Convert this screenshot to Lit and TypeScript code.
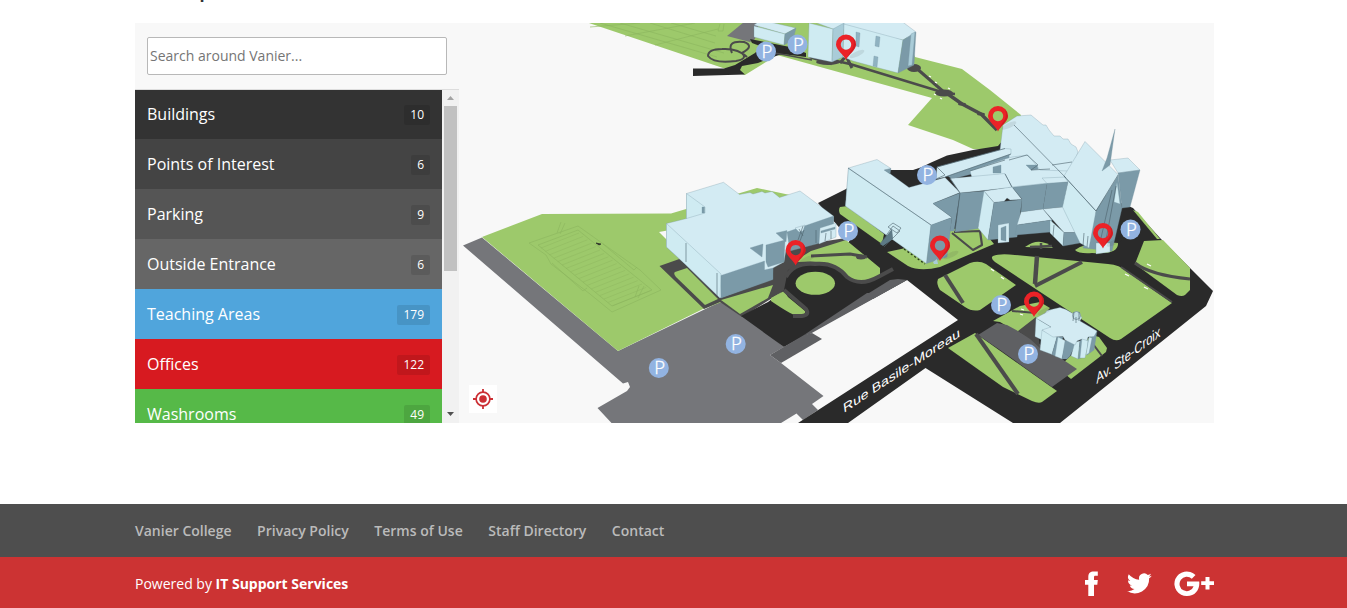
import { LitElement, html, css, svg } from "lit";
import { customElement } from "lit/decorators.js";

type Shape = [string, string];

const GREEN = "#9dc96b";
const ROAD = "#2a2a2a";
const PATH = "#4b4b4b";
const LOT = "#75767a";
const LOT2 = "#5f6063";
const ROOF = "#d3ebf3";
const WALL = "#cfebf2";
const DARK = "#7b9aa8";
const BG = "#f8f8f8";

const ground: Shape[] = [
  [GREEN, "580,20 900,20 915,57 962,69 990,90 1021,115 1015,150 973,149 953,140 908,125 932,98 777,55 745,75 723,68"],
  [LOT, "727,36 744,22 759,22 755,39 750,42"],
  [ROAD, "693,68.5 724,68.5 735,65 755,53 765,42 783,47 785,53 770,58 758,63 742,66 740,70 745,74.5 693,76"],
  [ROAD, "750,39 790,47 806,53 806,57 782,54 752,43"],
  [LOT, "463,245.5 482,237.5 618,351 722,301 742,313 784,347 770,355 781,363 823.5,396 812,404 818,410 803,420 796.5,413.5 781,423 611.5,423 597.5,408 627,391 630,387 628,382 623,383.5"],
  [GREEN, "482,237 542,214 671,213.5 757,188 790,195 800,250 722,302 703,309 618,351"],
  [BG, "659,232 670,230 670,243"],
  [PATH, "659.5,266 685,257 800,245 846,238 850,262 810,262 785,290 742,317 720,302 704,309"],
  [ROAD, "741,316 768,302 784,290 788,270 815,262 835,262 850,240 818,203 846,189 870,170 890,170 913,170 922,167 930,163 947,155.5 973,150 998,146 1003,140 1090,190 1133,208 1160,238 1213,291 1206,306 1060,423 1013,423 925.5,368 848,423 798,423 958,320 907,280 784,347"],
  [LOT2, "770,355 804,335 812,333 822,339 781,363"],
  [LOT2, "869,293 890,280 898,279 907,280 873,299"],
  [LOT2, "867,293 880,293 907,280 810,334 804,335"],
  [GREEN, "1133,210 1138,212 1160,239 1157,239"],
];

const lawns = [
  "M675,272 L687,268 L718,299 L705,305 L676,277 Q673,273 675,272Z",
  "M721,300 L773,285 L768,298 L740,314Z",
  "M771,298 L784,291 L788,297 L805,311 Q806,317 797,316 Q790,314 771,301Z",
  "M798,259 L811,251 L846,240 L880,268 L880,275 Q870,282 858,281 Q848,279 842,271 Q830,259 798,262Z",
  "M840,207 L848,206 L884,234 L882,244 L840,214 Q838,210 840,207Z",
  "M887,252 L920,245 L952,229 L980,227 L994,244 L940,267 Q920,272 908,266Z",
  "M938,279 L970,263 Q979,260 986,264 L1016,285 L980,310 Q972,312 965,307 L940,290 Q936,284 938,279Z",
  "M993,256 Q1000,253 1015,255 L1108,264 Q1120,265 1126,271 L1172,303 L1121,339 Q1116,342 1110,338 L995,262 Q990,258 993,256Z",
  "M1144,241 L1163,240 L1190,268 L1190,290 L1185,295 Q1182,297 1177,295 L1135,264Z",
  "M948,348 L975,333 L1057,391 L1042,402 Q1039,404 1032,401 L1003,387Z",
  "M993,321 L1020,306 L1040,302 L1050,308 L1034,325 L1017,332 L1000,322Z",
  "M1058,368 L1092,335 L1099,337 L1107,348 L1106,352 L1071,379Z",
  "M1025,247 Q1040,236 1053,248Z",
  "M1075,250 Q1090,240 1118,243 Q1119,255 1092,253 Q1079,254 1075,250Z",
];

const upperLots: Shape[] = [
  [LOT2, "978,335 997,323 1007,325 1029,337 1077,369 1052,387 1000,350"],
  [PATH, "1018,331 1036,317 1040,348 1030,339"],
];

const walks: [string, number][] = [
  ["M1037,256 L1035,284", 4.5],
  ["M1082,262 L1035,286", 4],
  ["M945,275 L963,303", 4],
  ["M976,334 L1018,394", 4],
  ["M1135,263 Q1150,275 1190,279", 3.2],
  ["M1121,267 L1172,302", 2],
  ["M811,256 L850,254 L867,257", 3],
  ["M952,233 L973,250 L982,245 L980,231 L954,232", 2.2],
  ["M1012,311 L1036,313", 2],
  ["M1090,340 L1102,356", 2],
  ["M1041,243 L1041,249 M1030,247 L1052,246", 2.5],
  ["M832,60 L850,64 L945,93 L955,94", 2.4],
  ["M840,63 L846,56 L852,68", 3],
  ["M915,67 L945,93", 3],
  ["M945,92 L962,104 L981,114 L997,130", 3.4],
  ["M810,56 L832,63", 4.5],
  ["M775,53 L812,60", 1.6],
  ["M732,53 Q726,40 744,42 Q755,46 742,53 Q748,59 736,61 Q714,64 708,56 Q708,49 722,49 Q738,48 747,57", 2],
  ["M784,290 L806,309 Q810,315 802,316 L793,316", 4],
  ["M786,277 Q794,262 815,264 Q835,262 847,277 Q860,287 878,277 L893,269", 4],
];

const blobs: [number, number, number, number][] = [
  [944, 93, 9, 3.5],
  [914, 68, 7, 4],
  [828, 62, 12, 3],
  [962, 104, 4, 1.6],
  [981, 114, 4, 1.6],
  [861, 257, 5, 2.5],
];

const buildings: Shape[] = [
  [ROOF, "686.5,193.5 723.5,182.3 739.5,194.5 750,192.5 753,194 762,191.5 765,193 772,191.5 779.5,197.5 800,191 833.5,216 833.5,224 786,250 784,262 773,268 772,279 720,298 685,264 666.5,247 666.5,223.5 686.5,218.5"],
  [WALL, "666.5,223.5 721,274 720,298 685,264 666.5,247"],
  [WALL, "686.5,193.5 705,207 705,213 686.5,218.5"],
  [DARK, "702,207 704.5,207 704.5,213 702,213"],
  [DARK, "721,275.5 764.5,261 764.5,270 773,268 773,279.5 721,298"],
  [DARK, "750,248 763,244 762,257"],
  [DARK, "766,245 785,240 784,262 768,267 766,262"],
  [DARK, "776,233 787,230.5 786,242"],
  [DARK, "787,232 833.5,216 833.5,227 820,232 820,243 790,251"],
  [ROOF, "795,228 805,225 803,231 799,232"],
  [ROOF, "820,228 836,223 836,237 819,244"],
  [DARK, "821,231 835,227 835,229 821,233"],
  [ROOF, "754,25 761,20 796,28 785,34"],
  [WALL, "754,26 785,34 784,45 754,37"],
  [DARK, "785,34 796,28 793,40 784,45"],
  [ROOF, "809,20 900,20 916,32 903,40 870,35 853,30 833,29"],
  [WALL, "809,23 833,29 832,62 808,57"],
  ["#a9ccd8", "833,29 844,23 843,57 832,62"],
  [WALL, "844,24 903,40 898,73 875,67 853,61 843,57"],
  [DARK, "903,40 916,32 914,65 898,73"],
  ["#8fb2c1", "856,32 860,33 859,47 856,46"],
  ["#8fb2c1", "876,36 880,37 879,47 875,46"],
  ["#8fb2c1", "874,56 878,57 877,67 873,66"],
  ["#a9ccd8", "911,34 915,32 912,65 908,66"],
  [ROOF, "1003,125 1017,116 1031,115 1043,125 1046,125 1049,130 1054,136 1060,136 1063,139 1068,139 1071,144 1076,147 1078,152 1068,182 1012,188 1000,150"],
  [DARK, "944,173 1010,150 1008,165 952,179"],
  [ROOF, "937,167 1005,148.5 1011,149 1011,154 945,177 936,179"],
  [ROOF, "970,171 1005,159 1012,157 1028,155 1040,170 1068,171 1068,181 1012,187 1005,174 972,178"],
  [DARK, "993,167 1001,165 1001,173 993,173"],
  [DARK, "1026,165 1037,165 1038,169 1031,170"],
  [ROOF, "848.5,168 877,159.5 891,168.5 885,170 909,187.5 945,177.5 960,192.5 933,203.5 952,217.5 931,225.5 926.5,263.5 845.5,206"],
  [WALL, "848.5,168 931,225 926.5,263.5 845.5,206"],
  [DARK, "884,170 891,168.5 890,174"],
  [DARK, "931,225 952,217.5 947,257 926.5,263.5"],
  [DARK, "933,203.5 960,193 954,231 950,231 952,217.5"],
  [ROOF, "950,178.5 1005,173.5 1012,187.5 960,193"],
  [DARK, "960,193 986,191 978,228.5 955,232"],
  [WALL, "984,191 994,202.5 988,240 978,228"],
  [ROOF, "984,191 1012,187 1022,199.5 1010,200 1007,198 1004,201.5 994,202.5"],
  [DARK, "994,202.5 1022,199.5 1017,237 988,240"],
  [ROOF, "998,225 1009,223 1009,242 998,243"],
  [DARK, "1001,228 1006,226 1006,241 1001,240"],
  [DARK, "1012.5,187.5 1047,183.5 1043,209 1021,212 1022,199"],
  [ROOF, "1042,178 1067,177 1068,182 1047,183.5"],
  [DARK, "1047,183.5 1068,182 1063,207 1043,209"],
  [ROOF, "1021,212 1043,209 1052,220 1017,225"],
  [DARK, "1017,225 1052,220 1051,232 1015,235"],
  [ROOF, "1043,209 1063,207 1081,232.5 1064,232.5"],
  [WALL, "1050,220 1064,232.5 1063,246 1050,233"],
  [DARK, "1064,232.5 1081,232.5 1080,243 1063,246"],
  [ROOF, "1110,160 1128,158 1140,170 1118,173"],
  [DARK, "1118,173 1140,170 1130,207 1122,208"],
  [DARK, "1096,211 1118,175 1122,208 1112,251 1083,248"],
  [WALL, "1064,176 1096,211 1089,248 1080,243 1062.5,207 1068,182"],
  [ROOF, "1085,141.5 1118.5,175 1096,211 1064,176"],
  [WALL, "1117,182 1120,204 1114,202"],
  [ROOF, "1096,243 1110,243 1110,252 1096,254"],
  [DARK, "1115,129 1110,165 1102,171 1107,158"],
  [WALL, "1036,318 1051,327 1042,340 1035,336.5"],
  [WALL, "1042,330 1057,337 1052,354.5 1040,350"],
  [DARK, "1057,337 1063,337 1057,357 1052,354.5"],
  [WALL, "1058,337 1066,341 1062,359 1055,356"],
  [DARK, "1065,341 1077,341 1070,356 1067,359 1062,359"],
  [WALL, "1075,342 1080,341 1078,359 1071,356"],
  [DARK, "1080,341 1088,334 1084,357 1078,359"],
  [WALL, "1082,338 1089,341 1085,358 1080,358"],
  [DARK, "1088,340 1092,336 1097,331 1094,350 1087,355"],
  [WALL, "1089,337 1092,338 1089,353 1086,355"],
  [ROOF, "1036,318 1045,313 1047,310.5 1060,307.5 1066,309.5 1072,313 1082,317 1080,321 1097,331 1094,336.5 1088,337 1087,340.5 1082,339 1077,341 1075,345 1065,340 1063,336.5 1053,337 1042,330 1051,327"],
];

const seams = [
  "M686,243 L686,262 M717,273 L717,296",
  "M848,168 L931,225",
  "M950,178 L960,193 L955,231",
  "M1014,125 L1066,178 M1052,165 L1072,162",
  "M936,179 L945,175 L937,167 M937,167 L1005,148.5 M945,177 L1011,154",
  "M1005,174 L1012,187 M1009,160 L1027,155 L1038,165 L1031,170 L1050,169 M970,171 L1005,160",
  "M1064,176 L1096,211 L1118,175",
  "M1112,190 L1101,238 M1116,186 L1106,240",
  "M880,244 L893,226 L900,231 L884,247 M888,227 L893,223 L901,228 L897,233Z",
  "M799,229 L803,236 M798,240 L803,226 M800,241 L804,230",
  "M816,230 L816,243 M826,233 L825,241 M831,231 L831,239",
  "M1084,233 L1083,246 M1088,236 L1087,247 M1054,225 L1053,236",
  "M1073,321 L1074,312 M1076,323 L1076,317 M1079,321 L1079,312",
];

const pins = [[846, 60], [998, 131.5], [795.7, 265.5], [940, 261], [1103, 248.5], [1034, 317]];
const parking = [[766, 51.5], [797.5, 44.5], [927, 175], [848, 231], [1130.5, 229.5], [1001, 305], [1028, 354], [658.8, 368], [735.7, 344]];

const fieldStripes = Array.from({ length: 18 }, (_, i) => {
  const x = 541 + i * 4.2;
  const y = 248 + i * 3.4;
  return `M${x},${y} L${x + 38},${y - 15}`;
}).join(" ");

@customElement("campus-map")
export class CampusMap extends LitElement {
  static styles = css`
    :host { display: block; width: 755px; height: 400px; position: relative; }
    .map { display: block; }
    .locate {
      position: absolute; left: 10px; bottom: 10px; width: 28px; height: 28px;
      background: #fff; display: flex; align-items: center; justify-content: center;
    }
    .letter { font: 300 18.5px "Open Sans", "Liberation Sans", sans-serif; fill: #fff; stroke: #fff; stroke-width: 0.35; text-anchor: middle; }
    .street { font-family: "Liberation Sans", Arial, sans-serif; fill: #fff; }
  `;

  render() {
    return html`
      <svg class="map" width="755" height="400" viewBox="459 23 755 400">
        ${ground.map(([c, p]) => svg`<polygon fill=${c} points=${p} />`)}
        <g fill="none" stroke="#8cb55e" stroke-width="0.6">
          <path d="M529,243 L578,226 L640,270 L661,290 L612,312 L590,294 L551,264 L546,255Z" />
          <path d="M538,245 L578,230 L652,290 L612,306Z" />
          <path d=${fieldStripes} opacity="0.75" />
          <path d="M552,263 L583,291 L587,288 M603,244 L634,270 L637,267 M557,233 L561,222 M560,234 L565,223 M635,297 L639,286 M638,298 L644,286" />
          <path d="M600,23 L717,57 M620,23 L724,53 M650,23 L715,43 M671,23 L716,36 M720,24 L718,31 L723,31 L724,24 M590,27 L640,23 M625,36 L695,23 M655,45 L718,29" />
        </g>
        <path d="M596,243 L601,244 L599,245Z" fill="#222" stroke="#222" stroke-width="0.6" />
        ${lawns.map((d) => svg`<path fill=${GREEN} d=${d} />`)}
        <ellipse cx="815.3" cy="283.3" rx="19.7" ry="11.5" fill=${GREEN} />
        ${upperLots.map(([c, p]) => svg`<polygon fill=${c} points=${p} />`)}
        ${walks.map(([d, w]) => svg`<path d=${d} fill="none" stroke=${PATH} stroke-width=${w} stroke-linejoin="round" />`)}
        ${blobs.map(([x, y, a, b]) => svg`<ellipse cx=${x} cy=${y} rx=${a} ry=${b} fill=${PATH} />`)}
        <path d="M991,269 l3,2 M1001,277 l3,2 M1125,274 l4,2 M1144,287 l4,2 M1147,264 l4,2 M929,76 l2,1 M935,82 l2,1 M948,88 l2,1 M940,98 l2,1 M934,94 l2,1 M1020,314 l3,1 M1021,309 l3,1" stroke="#fff" stroke-width="1.3" />
        ${buildings.map(([c, p]) => svg`<polygon fill=${c} points=${p} stroke="#7794a0" stroke-opacity="0.5" stroke-width="0.6" stroke-linejoin="round" />`)}
        <circle cx="1076.5" cy="315.5" r="4" fill="#c4dfe7" stroke="#708b96" stroke-width="0.7" />
        ${seams.map((d) => svg`<path d=${d} fill="none" stroke="#4b626c" stroke-width="0.6" />`)}
        <path d="M904,249 L925,264" stroke="#27361c" stroke-width="1.3" stroke-dasharray="2 2.2" />
        <path d="M880,244 L892,229 L893,239 L883,246Z" fill="#5d7986" />
        <path d="M933,262 l4,-3 l1,5 l-4,0Z" fill="#a9ccd8" />
        ${parking.map(([x, y]) => svg`
          <circle cx=${x} cy=${y} r="10" fill="#92b3e1" />
          <text class="letter" x=${x + 0.8} y=${y + 6.4}>P</text>`)}
        ${pins.map(([x, y]) => svg`
          <g transform="translate(${x} ${y})">
            <ellipse cx="11" cy="-6" rx="8" ry="2.6" fill="#333" opacity="0.1" transform="rotate(-25 11 -6)" />
            <path fill="#eb2227" fill-rule="evenodd" d="M0,0 C-2,-5 -10,-10 -10,-15.5 A10,10 0 0 1 10,-15.5 C10,-10 2,-5 0,0Z M0,-20.6 a5.2,5.2 0 1 0 0.01,0Z" />
            <path fill="#b9151b" opacity="0.5" d="M0,0 C2,-5 10,-10 10,-15.5 A10,10 0 0 0 7,-22.5 Q10,-14 4,-8Z" />
          </g>`)}
        <text class="street" font-size="13" textLength="139" lengthAdjust="spacingAndGlyphs" transform="matrix(0.838 -0.553 0.12 0.95 843.8 413)">Rue Basile-Moreau</text>
        <text class="street" font-size="15" textLength="80" lengthAdjust="spacingAndGlyphs" transform="matrix(0.8 -0.6 0.06 0.98 1096.5 384)">Av. Ste-Croix</text>
      </svg>
      <div class="locate">
        <svg width="20" height="20" viewBox="0 0 20 20" fill="none" stroke="#cc2f34">
          <circle cx="10" cy="10" r="6.9" stroke-width="1.7" />
          <circle cx="10" cy="10" r="3.8" fill="#cc2f34" stroke="none" />
          <path d="M10 0v4M10 16v4M0 10h4M16 10h4" stroke-width="1.8" />
        </svg>
      </div>
    `;
  }
}

const categories = [
  { name: "Buildings", count: 10, tone: "c0" },
  { name: "Points of Interest", count: 6, tone: "c1" },
  { name: "Parking", count: 9, tone: "c2" },
  { name: "Outside Entrance", count: 6, tone: "c3" },
  { name: "Teaching Areas", count: 179, tone: "c4" },
  { name: "Offices", count: 122, tone: "c5" },
  { name: "Washrooms", count: 49, tone: "c6" },
];

@customElement("app-root")
export class AppRoot extends LitElement {
  static styles = css`
    :host {
      display: flex; flex-direction: column; height: 608px; overflow: hidden;
      background: #fff; font-family: "Open Sans", "Noto Sans", sans-serif; color: #fff;
    }
    .wrap { width: 1079px; margin-left: 135px; box-sizing: border-box; }
    .title { height: 23px; overflow: hidden; }
    .title h1 { margin: -31px 0 0; font-size: 30px; line-height: 30px; font-weight: 500; color: #333; }
    .panel { display: flex; height: 400px; background: #f8f8f8; overflow: hidden; }
    .side { width: 324px; flex: none; display: flex; flex-direction: column; }
    .search { height: 67px; box-sizing: border-box; border-bottom: 1px solid #ddd; padding: 14px 12px 0; }
    .search input {
      display: block; box-sizing: border-box; width: 300px; height: 38px; padding: 0 2px 2px;
      border: 1px solid #b8b8b8; border-radius: 2px; background: #fff; font: 14px "Open Sans", sans-serif;
    }
    .search input::placeholder { color: #757575; }
    .scroller { display: flex; flex: 1; min-height: 0; overflow: hidden; }
    .list { flex: 1; }
    .row {
      height: 50px; box-sizing: border-box; padding: 0 12px; display: flex;
      align-items: center; justify-content: space-between; font-size: 16px;
    }
    .row:first-child { height: 49px; padding-bottom: 1px; }
    .row:first-child .badge { margin-top: 2px; }
    .badge {
      font-size: 12px; line-height: 20px; height: 20px; padding: 0 6px; border-radius: 2px;
      background: rgba(0, 0, 0, 0.1); margin-top: 1px; font-weight: 500;
    }
    .c0 { background: #333; }
    .c1 { background: #444; }
    .c2 { background: #555; }
    .c3 { background: #666; }
    .c4 { background: #50a5dc; }
    .c5 { background: #d71a20; }
    .c6 { background: #56b948; }
    .bar { width: 17px; background: #f1f1f1; display: flex; flex-direction: column; align-items: center; }
    .arrow { height: 16px; display: flex; align-items: center; flex: none; }
    .arrow.down { height: 18px; }
    .thumb { width: 13px; height: 165px; background: #c1c1c1; }
    .spacer { flex: 1; }
    .gap { height: 81px; flex: none; }
    .links { background: #4e4e4e; height: 53px; flex: none; }
    .links nav { display: flex; gap: 25.6px; height: 53px; align-items: center; font-size: 14px; font-weight: 600; color: #bbb; }
    .bottom { background: #cc3333; height: 51px; flex: none; }
    .bottom .wrap { height: 53px; display: flex; align-items: center; justify-content: space-between; font-size: 14px; font-weight: 500; }
    .bottom b { font-weight: 700; }
    .social { display: block; }
  `;

  render() {
    return html`
      <header class="title wrap"><h1>Campus</h1></header>
      <main class="panel wrap">
        <div class="side">
          <div class="search"><input type="text" placeholder="Search around Vanier..." /></div>
          <div class="scroller">
            <div class="list">
              ${categories.map((c) => html`
                <div class="row ${c.tone}"><span>${c.name}</span><span class="badge">${c.count}</span></div>`)}
            </div>
            <div class="bar">
              <div class="arrow"><svg width="7" height="4"><path d="M0 4L3.5 0L7 4Z" fill="#a3a3a3" /></svg></div>
              <div class="thumb"></div>
              <div class="spacer"></div>
              <div class="arrow down"><svg width="7" height="4"><path d="M0 0L3.5 4L7 0Z" fill="#505050" /></svg></div>
            </div>
          </div>
        </div>
        <campus-map></campus-map>
      </main>
      <div class="gap"></div>
      <footer>
        <div class="links">
          <nav class="wrap">
            <span>Vanier College</span><span>Privacy Policy</span><span>Terms of Use</span><span>Staff Directory</span><span>Contact</span>
          </nav>
        </div>
        <div class="bottom">
          <div class="wrap">
            <span>Powered by <b>IT Support Services</b></span>
            <svg class="social" width="130" height="26" viewBox="0 0.5 130 26" fill="#fff">
              <path d="M4.300 25.500V14.300H1V9.500H4.300V6.500C4.300 2.500 6.300 0.900 9.800 0.900H13.800V5.300H11.500C10.200 5.300 10 5.800 10 7V9.500H13.800L13.300 14.300H10V25.500Z" />
              <path transform="translate(43 0.500) scale(1.03)" d="M24 4.600a10 10 0 0 1-2.800.8 5 5 0 0 0 2.100-2.700 10 10 0 0 1-3.100 1.200 4.900 4.900 0 0 0-8.400 4.500A14 14 0 0 1 1.700 3.200a4.900 4.900 0 0 0 1.500 6.500 4.900 4.900 0 0 1-2.200-.6 4.900 4.900 0 0 0 3.900 4.900 5 5 0 0 1-2.200.1 4.900 4.900 0 0 0 4.600 3.400A9.900 9.900 0 0 1 0 19.500 14 14 0 0 0 21.500 7.100 10 10 0 0 0 24 4.600Z" />
              <path d="M111.500 4.600L107.800 8.300A7.200 7.200 0 1 0 109.600 15.700H103V10.900H115.200C116.200 18.500 111.500 25.500 103 25.500A12.300 12.300 0 1 1 111.500 4.600Z" />
              <path d="M121.500 6.500h4v4.300h4.500v3.800h-4.500v4.300h-4v-4.300h-4.300v-3.800h4.300Z" />
            </svg>
          </div>
        </div>
      </footer>
    `;
  }
}
